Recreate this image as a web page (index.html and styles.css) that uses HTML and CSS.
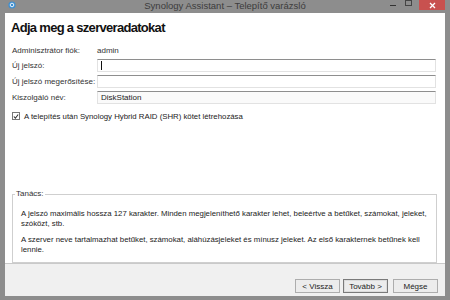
FILE: index.html
```html
<!DOCTYPE html>
<html lang="hu">
<head>
    <meta charset="UTF-8">
    <title>Synology Assistant – Telepítő varázsló</title>
    <link rel="stylesheet" href="styles.css">
</head>
<body>

<div class="window">
    <!-- Title bar -->
    <div class="titlebar">
        <span class="app-icon">
            <svg width="8" height="8" viewBox="0 0 8 8"><circle cx="4" cy="4" r="3.6" fill="#3f8fd0"/><circle cx="4" cy="4" r="1.8" fill="none" stroke="#e6f2fb" stroke-width="1"/></svg>
        </span>
        <span class="title">Synology Assistant – Telepítő varázsló</span>
        <div class="controls">
            <span class="ctl-min"></span>
            <span class="ctl-max"></span>
            <span class="ctl-close">
                <svg width="7" height="7" viewBox="0 0 7 7"><path d="M1 1 L6 6 M6 1 L1 6" stroke="#fff" stroke-width="1.3"/></svg>
            </span>
        </div>
    </div>

    <div class="client">
        <main class="page">
            <h1>Adja meg a szerveradatokat</h1>

            <div class="form">
                <div class="row">
                    <span class="label">Adminisztrátor fiók:</span>
                    <span class="value">admin</span>
                </div>
                <div class="row">
                    <label class="label" for="pw">Új jelszó:</label>
                    <div class="field" id="pw"><span class="caret"></span></div>
                </div>
                <div class="row">
                    <label class="label" for="pw2">Új jelszó megerősítése:</label>
                    <div class="field" id="pw2"></div>
                </div>
                <div class="row">
                    <label class="label" for="host">Kiszolgáló név:</label>
                    <div class="field" id="host">DiskStation</div>
                </div>
            </div>

            <div class="check-row">
                <span class="checkbox">
                    <svg width="7" height="7" viewBox="0 0 7 7"><path d="M1 3.5 L2.8 5.5 L6 1.2" fill="none" stroke="#333" stroke-width="1.3"/></svg>
                </span>
                <span>A telepítés után Synology Hybrid RAID (SHR) kötet létrehozása</span>
            </div>

            <fieldset class="hint">
                <legend>Tanács:</legend>
                <p>A jelszó maximális hossza 127 karakter. Minden megjeleníthető karakter lehet, beleértve a betűket, számokat, jeleket, szóközt, stb.</p>
                <p>A szerver neve tartalmazhat betűket, számokat, aláhúzásjeleket és mínusz jeleket. Az első karakternek betűnek kell lennie.</p>
            </fieldset>
        </main>

        <footer class="buttons">
            <button type="button">&lt; Vissza</button>
            <button type="button" class="default">Tovább &gt;</button>
            <button type="button" class="cancel">Mégse</button>
        </footer>
    </div>
</div>

</body>
</html>
```

FILE: styles.css
```css
html, body {
    margin: 0;
    padding: 0;
}
body {
    font-family: 'Liberation Sans', Arial, sans-serif;
    width: 450px;
    height: 300px;
    overflow: hidden;
    color: #222;
}
.window {
    width: 450px;
    height: 300px;
    box-sizing: border-box;
    background-color: #8d8d8d;
    padding: 0 5px 4px 5px;
    display: flex;
    flex-direction: column;
}
.titlebar {
    height: 13px;
    flex-shrink: 0;
    display: flex;
    align-items: center;
    position: relative;
}
.app-icon {
    display: flex;
    margin-left: 3px;
    margin-top: -4px;
}
.title {
    position: absolute;
    left: 0;
    right: 0;
    top: 0;
    text-align: center;
    font-size: 9.5px;
    line-height: 11px;
    color: #3c3c3c;
}
.controls {
    margin-left: auto;
    display: flex;
    align-items: flex-start;
    align-self: flex-start;
    height: 11px;
}
.ctl-min {
    width: 6px;
    height: 1px;
    background-color: #333;
    margin-top: 5px;
    margin-right: 9px;
}
.ctl-max {
    width: 5px;
    height: 4px;
    border: 1px solid #444;
    margin-right: 7px;
}
.ctl-close {
    width: 26px;
    height: 10px;
    background-color: #c8514f;
    display: flex;
    align-items: center;
    justify-content: center;
}
.client {
    flex: 1;
    min-height: 0;
    display: flex;
    flex-direction: column;
    background-color: #fff;
}
.page {
    flex: 1;
    min-height: 0;
    overflow: hidden;
    padding: 0 8px 0 7px;
}
h1 {
    font-size: 13px;
    line-height: 16px;
    letter-spacing: -0.7px;
    font-weight: bold;
    margin: 7px 0 8px -1px;
    color: #111;
}
.form {
    font-size: 8px;
}
.row {
    display: flex;
    align-items: center;
    height: 16px;
}
.row:first-child {
    height: 12px;
    margin-bottom: 1px;
}
.label {
    width: 85px;
    flex-shrink: 0;
    color: #333;
}
.value {
    color: #333;
}
.field {
    flex: 1;
    height: 13px;
    margin-right: 1px;
    box-sizing: border-box;
    border: 1px solid #e2e2e2;
    border-top-color: #8e8e8e;
    padding-left: 3px;
    line-height: 11px;
    color: #222;
    background-color: #fff;
}
.field#host {
    background-color: #fafafa;
}
.caret {
    display: inline-block;
    width: 1px;
    height: 9px;
    background-color: #111;
    vertical-align: middle;
}
.check-row {
    display: flex;
    align-items: center;
    gap: 4px;
    height: 10px;
    margin-top: 6px;
    font-size: 7.8px;
    color: #222;
}
.checkbox {
    width: 6px;
    height: 6px;
    border: 1px solid #777;
    display: flex;
    align-items: center;
    justify-content: center;
    background-color: #fff;
}
.hint {
    margin: 68px 0 0 0;
    padding: 10px 2px 7px 8px;
    border: 1px solid #cfcfcf;
    font-size: 7.8px;
    color: #222;
}
.hint legend {
    padding: 0 1px;
    margin-left: -6px;
    font-size: 8px;
    line-height: 10px;
    color: #333;
}
.hint p {
    margin: 0;
    line-height: 10px;
}
.hint p + p {
    margin-top: 6px;
}
.buttons {
    height: 33px;
    flex-shrink: 0;
    box-sizing: border-box;
    border-top: 1px solid #c9c9c9;
    background-color: #f0f0f0;
    display: flex;
    justify-content: flex-end;
    align-items: flex-end;
    padding: 0 7px 3px 0;
    gap: 3px;
}
.buttons button {
    width: 45px;
    height: 14px;
    padding: 0;
    margin: 0;
    font-family: 'Liberation Sans', Arial, sans-serif;
    font-size: 8px;
    color: #222;
    background-color: #ececec;
    border: 1px solid #adadad;
}
.buttons button.default {
    border: 1px solid #7a7a7a;
    box-shadow: inset 0 0 0 1px #dcdcdc;
}
.buttons button.cancel {
    margin-left: 2px;
}
```
